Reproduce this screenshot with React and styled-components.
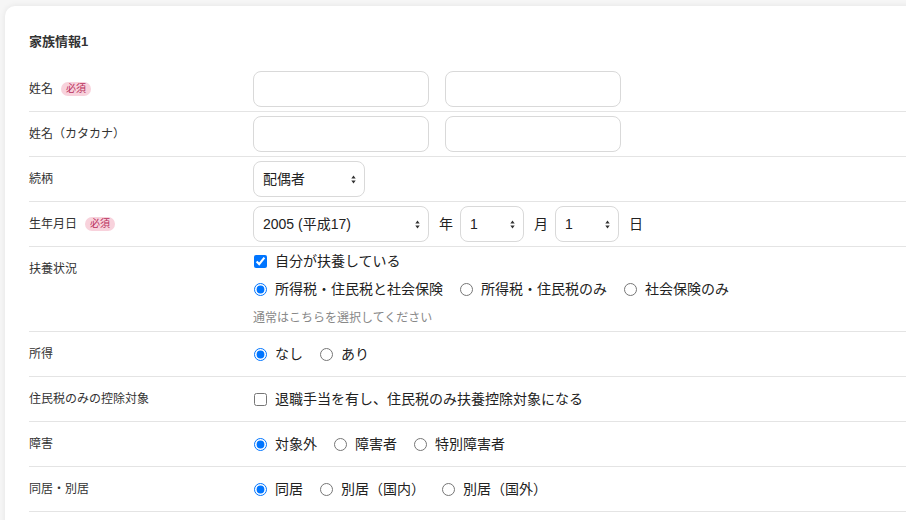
import React from 'react';
import styled, { createGlobalStyle } from 'styled-components';

const GlobalStyle = createGlobalStyle`
  html, body {
    margin: 0;
    padding: 0;
    background: #f6f6f6;
    overflow: hidden;
  }
  body {
    font-family: "Liberation Sans", "Noto Sans CJK JP", sans-serif;
    color: #333;
  }
`;

const Page = styled.div`
  padding: 6px 0 0 5px;
`;

const Card = styled.section`
  width: 1000px;
  min-height: 600px;
  background: #fff;
  border-radius: 10px;
  box-shadow: 0 0 6px rgba(0, 0, 0, 0.08);
  padding: 26px 0 0 24px;
  box-sizing: border-box;
`;

const Title = styled.h2`
  margin: 0 0 15px;
  font-size: 13px;
  font-weight: 700;
  line-height: 20px;
  color: #333;
`;

const Row = styled.div`
  display: grid;
  grid-template-columns: 224px 1fr;
  padding: 4px 0;
  border-bottom: 1px solid #e4e4e4;
`;

const Label = styled.div`
  display: flex;
  align-items: center;
  gap: 8px;
  align-self: start;
  padding-top: 8px;
  font-size: 12px;
  line-height: 20px;
  color: #333;
`;

const Badge = styled.span`
  display: inline-block;
  font-size: 10px;
  line-height: 14px;
  padding: 0 5px;
  border-radius: 7px;
  background: #f8d2dc;
  color: #b8305c;
`;

const Field = styled.div`
  display: flex;
  flex-direction: column;
  justify-content: center;
  min-height: 36px;
`;

const Line = styled.div`
  display: flex;
  align-items: center;
  font-size: 14px;
  line-height: 20px;
  color: #222;
  margin-top: ${(p) => (p.$gap ? p.$gap : 0)}px;
`;

const TextInput = styled.input`
  width: 176px;
  height: 36px;
  box-sizing: border-box;
  border: 1px solid #d9d9d9;
  border-radius: 8px;
  margin: 0 16px 0 0;
  padding: 0 10px;
  font-size: 14px;
  background: #fff;
`;

const arrows =
  "url(\"data:image/svg+xml,%3Csvg xmlns='http://www.w3.org/2000/svg' width='5' height='9' viewBox='0 0 5 9'%3E%3Cpath d='M0.3 3.6 L2.5 0.6 L4.7 3.6Z M0.3 5.4 L2.5 8.4 L4.7 5.4Z' fill='%23333'/%3E%3C/svg%3E\")";

const Select = styled.select`
  appearance: none;
  -webkit-appearance: none;
  width: ${(p) => p.$w}px;
  height: 36px;
  box-sizing: border-box;
  border: 1px solid #d9d9d9;
  border-radius: 8px;
  padding: 0 20px 0 9px;
  margin: 0;
  font-family: "Liberation Sans", "Noto Sans CJK JP", sans-serif;
  font-size: 14px;
  color: #222;
  background: #fff ${arrows} no-repeat right 8px center;
`;

const Unit = styled.span`
  font-size: 14px;
  color: #222;
  margin: 0 7px 0 10px;
`;

const Option = styled.label`
  display: inline-flex;
  align-items: center;
  margin-right: 16px;
  white-space: nowrap;
`;

const Mark = styled.input`
  width: 13px;
  height: 13px;
  margin: 0 8px 0 1px;
`;

const Help = styled.div`
  margin-top: 10px;
  font-size: 12px;
  line-height: 18px;
  color: #888;
`;

const RadioGroup = ({ name, options, checked }) => (
  <Line>
    {options.map((o, i) => (
      <Option key={o}>
        <Mark type="radio" name={name} defaultChecked={i === checked} />
        {o}
      </Option>
    ))}
  </Line>
);

export default function App() {
  return (
    <Page>
      <GlobalStyle />
      <Card>
        <Title>家族情報1</Title>

        <Row>
          <Label>
            姓名<Badge>必須</Badge>
          </Label>
          <Field>
            <Line>
              <TextInput />
              <TextInput />
            </Line>
          </Field>
        </Row>

        <Row>
          <Label>姓名（カタカナ）</Label>
          <Field>
            <Line>
              <TextInput />
              <TextInput />
            </Line>
          </Field>
        </Row>

        <Row>
          <Label>続柄</Label>
          <Field>
            <Line>
              <Select $w={112} defaultValue="配偶者">
                <option>配偶者</option>
                <option>子</option>
                <option>父母</option>
              </Select>
            </Line>
          </Field>
        </Row>

        <Row>
          <Label>
            生年月日<Badge>必須</Badge>
          </Label>
          <Field>
            <Line>
              <Select $w={176} defaultValue="2005">
                <option value="2005">2005 (平成17)</option>
              </Select>
              <Unit>年</Unit>
              <Select $w={64} defaultValue="1">
                <option>1</option>
              </Select>
              <Unit>月</Unit>
              <Select $w={64} defaultValue="1">
                <option>1</option>
              </Select>
              <Unit>日</Unit>
            </Line>
          </Field>
        </Row>

        <Row>
          <Label>扶養状況</Label>
          <Field>
            <Line>
              <Option>
                <Mark type="checkbox" defaultChecked />
                自分が扶養している
              </Option>
            </Line>
            <Line $gap={8}>
              {['所得税・住民税と社会保険', '所得税・住民税のみ', '社会保険のみ'].map((o, i) => (
                <Option key={o}>
                  <Mark type="radio" name="fuyo" defaultChecked={i === 0} />
                  {o}
                </Option>
              ))}
            </Line>
            <Help>通常はこちらを選択してください</Help>
          </Field>
        </Row>

        <Row>
          <Label>所得</Label>
          <Field>
            <RadioGroup name="shotoku" options={['なし', 'あり']} checked={0} />
          </Field>
        </Row>

        <Row>
          <Label>住民税のみの控除対象</Label>
          <Field>
            <Line>
              <Option>
                <Mark type="checkbox" />
                退職手当を有し、住民税のみ扶養控除対象になる
              </Option>
            </Line>
          </Field>
        </Row>

        <Row>
          <Label>障害</Label>
          <Field>
            <RadioGroup name="shogai" options={['対象外', '障害者', '特別障害者']} checked={0} />
          </Field>
        </Row>

        <Row>
          <Label>同居・別居</Label>
          <Field>
            <RadioGroup name="dokyo" options={['同居', '別居（国内）', '別居（国外）']} checked={0} />
          </Field>
        </Row>

        <Row>
          <Label>備考</Label>
          <Field>
            <Line>
              <Option>
                <Mark type="radio" name="biko" defaultChecked />
                なし
              </Option>
            </Line>
          </Field>
        </Row>
      </Card>
    </Page>
  );
}
